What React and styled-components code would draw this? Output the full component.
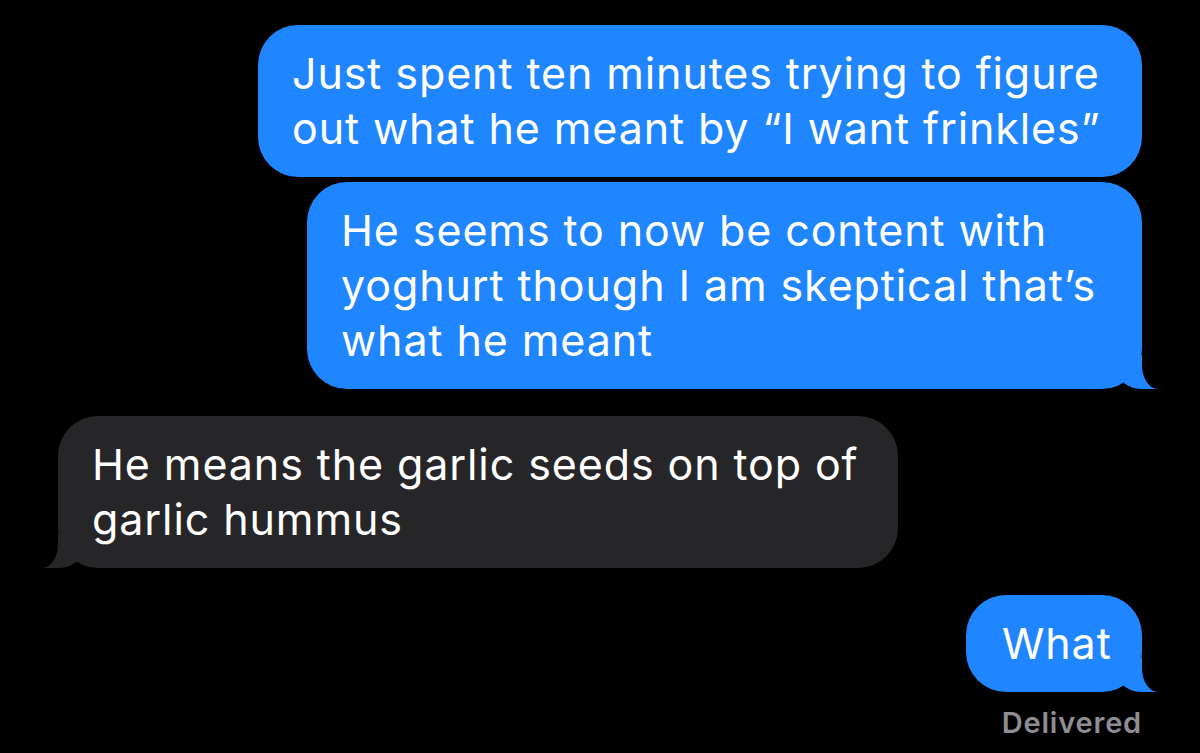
import React from 'react';
import styled, { createGlobalStyle, css } from 'styled-components';

const GlobalStyle = createGlobalStyle`
  html, body {
    margin: 0;
    padding: 0;
    background: #000;
  }
  body {
    font-family: Inter, "Noto Sans", sans-serif;
    -webkit-font-smoothing: antialiased;
  }
`;

const BLUE = '#1f86ff';
const GRAY = '#262628';

const Thread = styled.div`
  width: 1200px;
  height: 753px;
  box-sizing: border-box;
  padding: 25px 58px 0 58px;
  display: flex;
  flex-direction: column;
  background: #000;
  overflow: hidden;
`;

const tailSent = css`
  &::before {
    content: "";
    position: absolute;
    z-index: 0;
    bottom: 0;
    right: -16px;
    width: 40px;
    height: 34px;
    background: ${BLUE};
    border-bottom-left-radius: 24px 18px;
  }
  &::after {
    content: "";
    position: absolute;
    z-index: 1;
    bottom: 0;
    right: -40px;
    width: 40px;
    height: 34px;
    background: #000;
    border-bottom-left-radius: 16px 24px;
  }
`;

const tailReceived = css`
  &::before {
    content: "";
    position: absolute;
    z-index: 0;
    bottom: 0;
    left: -16px;
    width: 40px;
    height: 34px;
    background: ${GRAY};
    border-bottom-right-radius: 24px 18px;
  }
  &::after {
    content: "";
    position: absolute;
    z-index: 1;
    bottom: 0;
    left: -40px;
    width: 40px;
    height: 34px;
    background: #000;
    border-bottom-right-radius: 16px 24px;
  }
`;

const Bubble = styled.div`
  position: relative;
  box-sizing: border-box;
  align-self: ${(p) => (p.$fromMe ? 'flex-end' : 'flex-start')};
  width: ${(p) => p.$width}px;
  margin-top: ${(p) => p.$gap || 0}px;
  padding: 21px 34px 21px ${(p) => p.$padLeft || 34}px;
  border-radius: 40px;
  background: ${(p) => (p.$fromMe ? BLUE : GRAY)};
  color: #fff;
  font-size: 43px;
  line-height: 55px;
  letter-spacing: 0.9px;
  white-space: nowrap;
  ${(p) => p.$tail && (p.$fromMe ? tailSent : tailReceived)}
`;

const Line = styled.span`
  display: block;
  position: relative;
  z-index: 2;
`;

const Status = styled.div`
  align-self: flex-end;
  margin-top: 14px;
  color: #8d8d93;
  font-size: 29px;
  font-weight: 600;
  line-height: 34px;
  letter-spacing: 0.8px;
`;

const messages = [
  { fromMe: true, gap: 0, tail: false, width: 884, lines: ['Just spent ten minutes trying to figure', 'out what he meant by \u201cI want frinkles\u201d'] },
  { fromMe: true, gap: 5, tail: true, width: 835, lines: ['He seems to now be content with', 'yoghurt though I am skeptical that\u2019s', 'what he meant'] },
  { fromMe: false, gap: 27, tail: true, width: 840, lines: ['He means the garlic seeds on top of', 'garlic hummus'] },
  { fromMe: true, gap: 27, tail: true, width: 176, padLeft: 36, lines: ['What'] },
];

export default function App() {
  return (
    <>
      <GlobalStyle />
      <Thread>
        {messages.map((m, i) => (
          <Bubble key={i} $fromMe={m.fromMe} $gap={m.gap} $tail={m.tail} $width={m.width} $padLeft={m.padLeft}>
            {m.lines.map((l, j) => (
              <Line key={j}>{l}</Line>
            ))}
          </Bubble>
        ))}
        <Status>Delivered</Status>
      </Thread>
    </>
  );
}
